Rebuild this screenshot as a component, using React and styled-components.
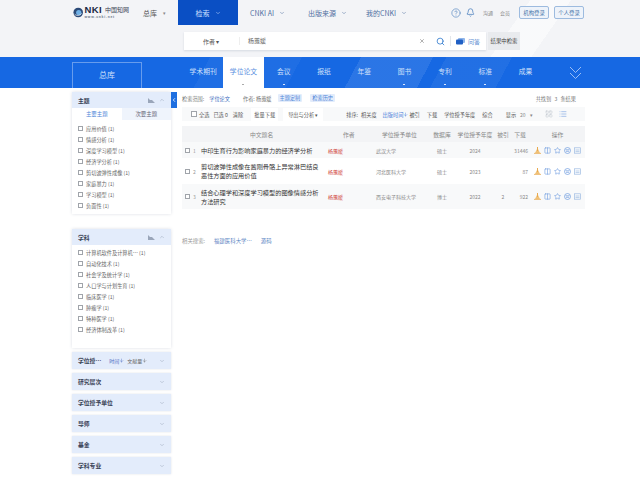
import React from "react";
import styled, { createGlobalStyle } from "styled-components";
import { ChevronDown, ChevronUp, ChevronLeft, Search, X, CircleHelp, Bell, ArrowDown, LayoutGrid, List, Columns2, Star } from "lucide-react";

const GlobalStyle = createGlobalStyle`
  html, body {
    margin: 0;
    padding: 0;
    width: 640px;
    height: 482px;
    overflow: hidden;
    background: #fff;
    font-family: "Noto Sans CJK SC", "Liberation Sans", sans-serif;
    color: #333;
  }
  * { box-sizing: border-box; }
`;

const Page = styled.div`
  width: 640px;
  height: 482px;
  overflow: hidden;
  display: flex;
  flex-direction: column;
`;

const Top = styled.div`
  height: 57px;
  background:
    linear-gradient(125deg, transparent 0 78%, rgba(255, 255, 255, 0.5) 78% 84%, transparent 84%),
    #f3f4f7;
`;

const Nav = styled.div`
  height: 25px;
  display: flex;
  align-items: center;
  padding-left: 73px;
`;

const Logo = styled.div`
  width: 56px;
  height: 17px;
  display: flex;
  align-items: center;
  gap: 1px;
  flex-shrink: 0;
  margin-right: 14px;
`;

const LogoStack = styled.div`
  display: flex;
  flex-direction: column;
`;

const LogoTop = styled.div`
  display: flex;
  align-items: center;
  height: 9px;
`;

const LogoWord = styled.span`
  font: 700 9.5px/9px "Liberation Sans", sans-serif;
  color: #1c2a44;
  letter-spacing: 0.4px;
`;

const LogoText = styled.span`
  margin-left: 3px;
  font-size: 6px;
  line-height: 9px;
  color: #3a4254;
  white-space: nowrap;
`;

const LogoUrl = styled.span`
  margin-top: 1px;
  font: 700 3.4px/5px "Liberation Sans", sans-serif;
  color: #6a7488;
  letter-spacing: 0.75px;
  white-space: nowrap;
`;

const NavItem = styled.div`
  width: ${(p) => p.$w}px;
  height: 25px;
  display: flex;
  align-items: center;
  justify-content: ${(p) => (p.$active ? "center" : "flex-start")};
  padding-left: ${(p) => p.$pl || 0}px;
  gap: ${(p) => p.$gap || 5}px;
  font-size: 7px;
  white-space: nowrap;
  color: ${(p) => (p.$active ? "#cfe0ff" : p.$blue ? "#4f6f9f" : "#555")};
  background: ${(p) => (p.$active ? "#0a4fc4" : "transparent")};
`;

const NavRight = styled.div`
  display: flex;
  align-items: center;
  margin-left: 39px;
  color: #4a7fbd;
  gap: 5px;
`;

const SmallGray = styled.span`
  font-size: 5px;
  color: #888;
  margin-left: ${(p) => p.$ml || 0}px;
`;

const LoginBtn = styled.div`
  width: 30px;
  height: 13px;
  border: 1px solid #9dbbdf;
  border-radius: 2px;
  background: #eef3fa;
  color: #4673a8;
  font-size: 5.4px;
  display: flex;
  align-items: center;
  justify-content: center;
  margin-left: ${(p) => p.$ml || 0}px;
`;

const SearchRow = styled.div`
  height: 32px;
  display: flex;
  align-items: flex-start;
  gap: 2px;
  padding: 7px 0 0 184px;
`;

const SearchBox = styled.div`
  width: 302px;
  height: 18px;
  background: #fff;
  box-shadow: 0 1px 2px rgba(120, 135, 160, 0.25);
  display: flex;
  align-items: center;
  font-size: 6px;
  color: #666;
`;

const FieldSelect = styled.div`
  width: 55px;
  padding-left: 19px;
  color: #555;
`;

const Keyword = styled.div`
  flex: 1;
  border-left: 1px solid #eee;
  padding-left: 8px;
  height: 8px;
  line-height: 8px;
`;

const SearchIcon = styled(Search)`
  margin-left: 11px;
  color: #1f6fc9;
`;

const AskLabel = styled.div`
  display: flex;
  align-items: center;
  gap: 3px;
  margin: 0 6px 0 5px;
  padding-left: 5px;
  border-left: 1px solid #e3e6ea;
  color: #5c8cd0;
  height: 10px;
`;

const InnerBtn = styled.div`
  width: 32px;
  height: 18px;
  background: #e9ebee;
  font-size: 5.4px;
  color: #444;
  display: flex;
  align-items: center;
  justify-content: center;
  white-space: nowrap;
`;

const Band = styled.div`
  height: 31px;
  flex-shrink: 0;
  display: flex;
  align-items: flex-end;
  padding-left: 72px;
  background:
    linear-gradient(118deg, transparent 0 55%, rgba(255, 255, 255, 0.09) 55% 66%, transparent 66%),
    linear-gradient(118deg, transparent 0 68%, rgba(255, 255, 255, 0.05) 68% 78%, transparent 78%),
    linear-gradient(118deg, transparent 0 32%, rgba(255, 255, 255, 0.04) 32% 46%, transparent 46%),
    #1668e3;
`;

const MainTab = styled.div`
  width: 70px;
  height: 26px;
  border: 1px solid rgba(255, 255, 255, 0.35);
  border-bottom: none;
  color: #cfe0fb;
  font-size: 8px;
  display: flex;
  align-items: center;
  justify-content: center;
  margin-right: 41px;
  padding-bottom: 2px;
`;

const DbTabs = styled.div`
  display: flex;
  height: 31px;
`;

const DbTab = styled.div`
  position: relative;
  width: 40.3px;
  height: 31px;
  padding-top: 9px;
  text-align: center;
  font-size: 6.8px;
  line-height: 10px;
  color: ${(p) => (p.$active ? "#5a8fe0" : "#cfe0fb")};
  background: ${(p) => (p.$active ? "#fff" : "transparent")};
  &::after {
    content: "";
    display: ${(p) => (p.$dot ? "block" : "none")};
    position: absolute;
    left: 19px;
    bottom: 3px;
    width: 2px;
    height: 1px;
    background: ${(p) => (p.$active ? "#aaa" : "#dce8ff")};
  }
`;

const BandChevron = styled.div`
  width: 30px;
  height: 31px;
  margin-left: 15px;
  display: flex;
  align-items: center;
  justify-content: center;
  color: #a9c8f8;
`;

const Body = styled.div`
  flex: 1;
  display: flex;
  padding: 4px 0 0 72px;
  background: #fff;
`;

const Side = styled.div`
  position: relative;
  width: 99px;
  flex-shrink: 0;
  display: flex;
  flex-direction: column;
`;

const Collapse = styled.div`
  position: absolute;
  left: 99px;
  top: 0;
  width: 6px;
  height: 16px;
  background: #1e6fe0;
  color: #fff;
  display: flex;
  align-items: center;
  justify-content: center;
`;

const Panel = styled.div`
  background: #fff;
  box-shadow: 0 0 3px rgba(130, 140, 160, 0.28);
  height: ${(p) => p.$h}px;
  margin-bottom: ${(p) => p.$mb}px;
`;

const PanelHead = styled.div`
  height: ${(p) => p.$h || 16}px;
  background: #e3ecfb;
  display: flex;
  align-items: center;
  padding: 0 6px;
  font-size: 5.8px;
  font-weight: 700;
  color: #3a4356;
  margin-bottom: ${(p) => p.$mb || 0}px;
  box-shadow: ${(p) => (p.$solo ? "0 0 2px rgba(130,140,160,0.25)" : "none")};
`;

const HeadTitle = styled.span`
  flex: ${(p) => (p.$fixed ? "none" : 1)};
`;

const HeadIcons = styled.span`
  display: flex;
  align-items: center;
  gap: 4px;
  color: #9aa6ba;
  margin-left: ${(p) => (p.$auto ? "auto" : "0")};
`;

const SortLabel = styled.span`
  font-size: 5px;
  font-weight: 400;
  margin-left: ${(p) => p.$ml}px;
  color: ${(p) => (p.$blue ? "#4a68c0" : "#666")};
  display: flex;
  align-items: center;
`;

const SubTabs = styled.div`
  height: 12px;
  display: flex;
  font-size: 5.4px;
  line-height: 12px;
  text-align: center;
  margin-bottom: 3px;
`;

const SubTab = styled.div`
  flex: 1;
  color: ${(p) => (p.$active ? "#4f86d8" : "#667")};
  background: ${(p) => (p.$active ? "#fff" : "#eff4fc")};
`;

const FacetList = styled.div`
  padding: ${(p) => p.$pt || 0}px 0 0 6px;
`;

const Facet = styled.div`
  height: 11px;
  display: flex;
  align-items: center;
  gap: 3px;
  font-size: 5.2px;
  color: #666;
  white-space: nowrap;
`;

const Check = styled.span`
  width: ${(p) => p.$s || 5}px;
  height: ${(p) => p.$s || 5}px;
  border: 0.6px solid #a0a4aa;
  background: #fff;
  flex-shrink: 0;
  display: inline-block;
`;

const Main = styled.div`
  width: 403px;
  margin-left: 11px;
  display: flex;
  flex-direction: column;
`;

const Crumbs = styled.div`
  height: 15px;
  padding-bottom: 3px;
  display: flex;
  align-items: center;
  font-size: 5.2px;
  color: #777;
`;

const CrumbText = styled.span`
  margin-left: ${(p) => p.$ml || 0}px;
  color: ${(p) => (p.$blue ? "#3f6fc0" : "#777")};
  white-space: nowrap;
`;

const Chip = styled.span`
  margin-left: ${(p) => p.$ml}px;
  background: #e3ecfb;
  color: #4f86d8;
  padding: 0 2px;
  line-height: 8px;
  border-radius: 1px;
`;

const Total = styled.span`
  margin-left: auto;
  margin-right: 9px;
  color: #777;
  word-spacing: 2px;
`;

const Toolbar = styled.div`
  height: 14px;
  display: flex;
  align-items: center;
  padding-left: 9px;
  font-size: 5.2px;
  color: #555;
  white-space: nowrap;
  background: #f8f9fa;
  margin-bottom: 5px;
`;

const ToolText = styled.span`
  margin-left: ${(p) => p.$ml || 0}px;
  color: ${(p) => (p.$blue ? "#3f78d8" : "#555")};
  display: flex;
  align-items: center;
`;

const ToolBtn = styled.span`
  margin-left: ${(p) => p.$ml || 0}px;
  width: ${(p) => p.$w}px;
  text-align: center;
  line-height: 13px;
  background: #fff;
`;

const ViewIcon = styled.span`
  margin-left: ${(p) => p.$ml || 0}px;
  display: flex;
  color: ${(p) => (p.$active ? "#4f86d8" : "#a4acb8")};
`;

const grid = "19px 127px 48px 54px 24px 42px 14px 20px 55px";

const TableHead = styled.div`
  height: 16px;
  display: grid;
  grid-template-columns: ${grid};
  align-items: center;
  background: #f3f4f6;
  font-size: 5.8px;
  color: #888;
  text-align: center;
  white-space: nowrap;
`;

const HeadLeft = styled.span`
  text-align: left;
  padding-left: ${(p) => p.$pl}px;
`;

const Row = styled.div`
  height: ${(p) => p.$h}px;
  display: grid;
  grid-template-columns: ${grid};
  align-items: center;
  font-size: 5px;
  color: #888;
  text-align: center;
  background: ${(p) => (p.$white ? "#fff" : "#f8f9fa")};
`;

const Num = styled.div`
  display: flex;
  align-items: center;
  gap: 3px;
  padding-left: 3px;
  font-size: 5px;
  color: #999;
`;

const TitleCell = styled.div`
  font-size: 6.2px;
  line-height: 9px;
  color: #333;
  text-align: left;
  padding-right: 7px;
`;

const Author = styled.div`
  color: #d0453c;
  text-align: left;
  white-space: nowrap;
`;

const Cell = styled.div`
  white-space: nowrap;
  text-align: ${(p) => p.$align || "center"};
  padding-right: ${(p) => p.$pr || 0}px;
`;

const Actions = styled.div`
  display: flex;
  gap: 3px;
  padding-left: 4px;
  color: #6a9ade;
`;

const RelatedRow = styled.div`
  margin-top: 28px;
  display: flex;
  font-size: 5.4px;
  line-height: 8px;
  gap: 9px;
  color: #5b86c4;
`;

const RelatedLabel = styled.span`
  color: #999;
`;

const dbTabs = [
  { t: "学术期刊" },
  { t: "学位论文", active: true, dot: true },
  { t: "会议", dot: true },
  { t: "报纸" },
  { t: "年鉴" },
  { t: "图书", dot: true },
  { t: "专利", dot: true },
  { t: "标准", dot: true },
  { t: "成果" },
];
const topics = ["应用价值 (1)", "情感分析 (1)", "深度学习模型 (1)", "经济学分析 (1)", "剪切波弹性成像 (1)", "家庭暴力 (1)", "学习模型 (1)", "负面性 (1)"];
const subjects = ["计算机软件及计算机…  (1)", "自动化技术 (1)", "社会学及统计学 (1)", "人口学与计划生育 (1)", "临床医学 (1)", "肿瘤学 (1)", "特种医学 (1)", "经济体制改革 (1)"];
const collapsed = ["研究层次", "学位授予单位", "导师", "基金", "学科专业"];
const rows = [
  { n: 1, h: 16, title: "中印生育行为影响家庭暴力的经济学分析", unit: "武汉大学", db: "硕士", year: 2024, cite: "", dl: 31446 },
  { n: 2, h: 26, title: "剪切波弹性成像在酱刚骨骼上异常淋巴结良恶性方面的应用价值", unit: "河北医科大学", db: "硕士", year: 2023, cite: "", dl: 87, white: true },
  { n: 3, h: 25, title: "结合心理学和深度学习模型的图像情感分析方法研究", unit: "西安电子科技大学", db: "博士", year: 2022, cite: 2, dl: 922 },
];

const ChartMark = () => (
  <svg width="7" height="6" viewBox="0 0 7 6">
    <path d="M0 6V1l2 2h2l3 3z" fill="#9aa6ba" />
  </svg>
);

const DownloadMark = () => (
  <svg width="7" height="7" viewBox="0 0 7 7">
    <path d="M3.5 1L6 6H1z" fill="#f0c27a" />
    <path d="M0 6.4h7" stroke="#e8a94e" strokeWidth="0.8" />
    <path d="M3.5 0v4" stroke="#e8a94e" strokeWidth="1" />
  </svg>
);

const CiteMark = () => (
  <svg width="7" height="7" viewBox="0 0 7 7" fill="none" stroke="currentColor" strokeWidth="0.7">
    <circle cx="3.5" cy="3.5" r="3" />
    <path d="M1.5 2.8h4M2 4.3h3" />
  </svg>
);

const ExportMark = () => (
  <svg width="7" height="7" viewBox="0 0 7 7" fill="none" stroke="#9dbbe2" strokeWidth="0.7">
    <rect x="0.4" y="0.8" width="6.2" height="5.4" />
    <path d="M1.5 3h4M1.5 4.6h4" />
  </svg>
);

const BandChevrons = () => (
  <svg width="13" height="14" viewBox="0 0 13 14" fill="none" stroke="currentColor" strokeWidth="0.9">
    <path d="M1 1l5.5 5.5L12 1M1 7l5.5 5.5L12 7" />
  </svg>
);

function FacetPanel({ title, h, mb, items, tabs, pt }) {
  return (
    <Panel $h={h} $mb={mb}>
      <PanelHead>
        <HeadTitle>{title}</HeadTitle>
        <HeadIcons>
          <ChartMark />
          <ChevronUp size={6} />
        </HeadIcons>
      </PanelHead>
      {tabs && (
        <SubTabs>
          <SubTab $active>主要主题</SubTab>
          <SubTab>次要主题</SubTab>
        </SubTabs>
      )}
      <FacetList $pt={pt}>
        {items.map((f) => (
          <Facet key={f}>
            <Check />
            {f}
          </Facet>
        ))}
      </FacetList>
    </Panel>
  );
}

export default function App() {
  return (
    <Page>
      <GlobalStyle />
      <Top>
        <Nav>
          <Logo>
            <svg width="11" height="11" viewBox="0 0 12 12">
              <circle cx="6" cy="6" r="5.5" fill="#2b4a78" />
              <circle cx="6.6" cy="6" r="3" fill="#6fb0e6" />
              <path d="M2 8c2 2 6 2 8-1" stroke="#fff" strokeWidth="0.8" fill="none" />
            </svg>
            <LogoStack>
              <LogoTop>
                <LogoWord>NKI</LogoWord>
                <LogoText>中国知网</LogoText>
              </LogoTop>
              <LogoUrl>www.cnki.net</LogoUrl>
            </LogoStack>
          </Logo>
          <NavItem $w={35} $gap={6}>总库<SmallGray>▾</SmallGray></NavItem>
          <NavItem $w={60} $active>检索<ChevronDown size={6} /></NavItem>
          <NavItem $w={58} $pl={12} $blue>CNKI AI<ChevronDown size={6} /></NavItem>
          <NavItem $w={58} $pl={12} $blue>出版来源<ChevronDown size={6} /></NavItem>
          <NavItem $w={58} $pl={12} $blue>我的CNKI<ChevronDown size={6} /></NavItem>
          <NavRight>
            <CircleHelp size={10} strokeWidth={1.5} />
            <Bell size={9} strokeWidth={2} />
            <SmallGray $ml={3}>沟通</SmallGray>
            <SmallGray $ml={2}>会员</SmallGray>
            <LoginBtn $ml={4}>机构登录</LoginBtn>
            <LoginBtn>个人登录</LoginBtn>
          </NavRight>
        </Nav>
        <SearchRow>
          <SearchBox>
            <FieldSelect>作者 ▾</FieldSelect>
            <Keyword>杨蕙媛</Keyword>
            <X size={6} color="#666" />
            <SearchIcon size={9} strokeWidth={2} />
            <AskLabel>
              <svg width="9" height="7" viewBox="0 0 9 7">
                <rect x="2" y="0" width="7" height="5" rx="1" fill="#8fb5ea" />
                <rect x="0" y="1.5" width="7" height="5" rx="1" fill="#1f5fc4" />
              </svg>
              问答
            </AskLabel>
          </SearchBox>
          <InnerBtn>结果中检索</InnerBtn>
        </SearchRow>
      </Top>
      <Band>
        <MainTab>总库</MainTab>
        <DbTabs>
          {dbTabs.map((d) => (
            <DbTab key={d.t} $active={d.active} $dot={d.dot}>{d.t}</DbTab>
          ))}
        </DbTabs>
        <BandChevron><BandChevrons /></BandChevron>
      </Band>
      <Body>
        <Side>
          <Collapse><ChevronLeft size={6} strokeWidth={3} /></Collapse>
          <FacetPanel title="主题" h={122} mb={15} items={topics} tabs />
          <FacetPanel title="学科" h={119} mb={4} items={subjects} pt={2} />
          <PanelHead $h={17} $mb={4} $solo>
            <HeadTitle $fixed>学位授…</HeadTitle>
            <SortLabel $ml={8} $blue>时间<ArrowDown size={5} /></SortLabel>
            <SortLabel $ml={3}>文献量<ArrowDown size={5} /></SortLabel>
            <HeadIcons $auto><ChevronDown size={6} /></HeadIcons>
          </PanelHead>
          {collapsed.map((c) => (
            <PanelHead key={c} $h={17} $mb={4} $solo>
              <HeadTitle>{c}</HeadTitle>
              <HeadIcons><ChevronDown size={6} /></HeadIcons>
            </PanelHead>
          ))}
        </Side>
        <Main>
          <Crumbs>
            <CrumbText>检索范围:</CrumbText>
            <CrumbText $ml={5} $blue>学位论文</CrumbText>
            <CrumbText $ml={13}>作者: 杨蕙媛</CrumbText>
            <Chip $ml={6}>主题定制</Chip>
            <Chip $ml={8}>检索历史</Chip>
            <Total>共找到 3 条结果</Total>
          </Crumbs>
          <Toolbar>
            <Check $s={6} />
            <ToolText $ml={2}>全选</ToolText>
            <ToolText $ml={4}>已选 0</ToolText>
            <ToolText $ml={5}>清除</ToolText>
            <ToolBtn $ml={8} $w={27}>批量下载</ToolBtn>
            <ToolBtn $ml={5} $w={40}>导出与分析 ▾</ToolBtn>
            <ToolText $ml={23}>排序:</ToolText>
            <ToolText $ml={3}>相关度</ToolText>
            <ToolText $ml={6} $blue>出版时间<ArrowDown size={5} /></ToolText>
            <ToolText $ml={1}>被引</ToolText>
            <ToolText $ml={7}>下载</ToolText>
            <ToolText $ml={7}>学位授予年度</ToolText>
            <ToolText $ml={7}>综合</ToolText>
            <ToolText $ml={13}>显示 <SmallGray $ml={4}>20</SmallGray><SmallGray $ml={4}>▾</SmallGray></ToolText>
            <ViewIcon $ml={12}><LayoutGrid size={8} strokeWidth={1} /></ViewIcon>
            <ViewIcon $ml={6} $active><List size={8} strokeWidth={1.4} /></ViewIcon>
          </Toolbar>
          <TableHead>
            <span />
            <HeadLeft $pl={49}>中文题名</HeadLeft>
            <HeadLeft $pl={15}>作者</HeadLeft>
            <HeadLeft $pl={6}>学位授予单位</HeadLeft>
            <span>数据库</span>
            <span>学位授予年度</span>
            <span>被引</span>
            <span>下载</span>
            <span>操作</span>
          </TableHead>
          {rows.map((r) => (
            <Row key={r.n} $h={r.h} $white={r.white}>
              <Num><Check $s={5} />{r.n}</Num>
              <TitleCell>{r.title}</TitleCell>
              <Author>杨蕙媛</Author>
              <Cell $align="left">{r.unit}</Cell>
              <Cell>{r.db}</Cell>
              <Cell>{r.year}</Cell>
              <Cell>{r.cite}</Cell>
              <Cell $align="right" $pr={2}>{r.dl}</Cell>
              <Actions>
                <DownloadMark />
                <Columns2 size={7} />
                <Star size={7} />
                <CiteMark />
                <ExportMark />
              </Actions>
            </Row>
          ))}
          <RelatedRow>
            <RelatedLabel>相关搜索:</RelatedLabel>
            <span>福建医科大学…</span>
            <span>源码</span>
          </RelatedRow>
        </Main>
      </Body>
    </Page>
  );
}
